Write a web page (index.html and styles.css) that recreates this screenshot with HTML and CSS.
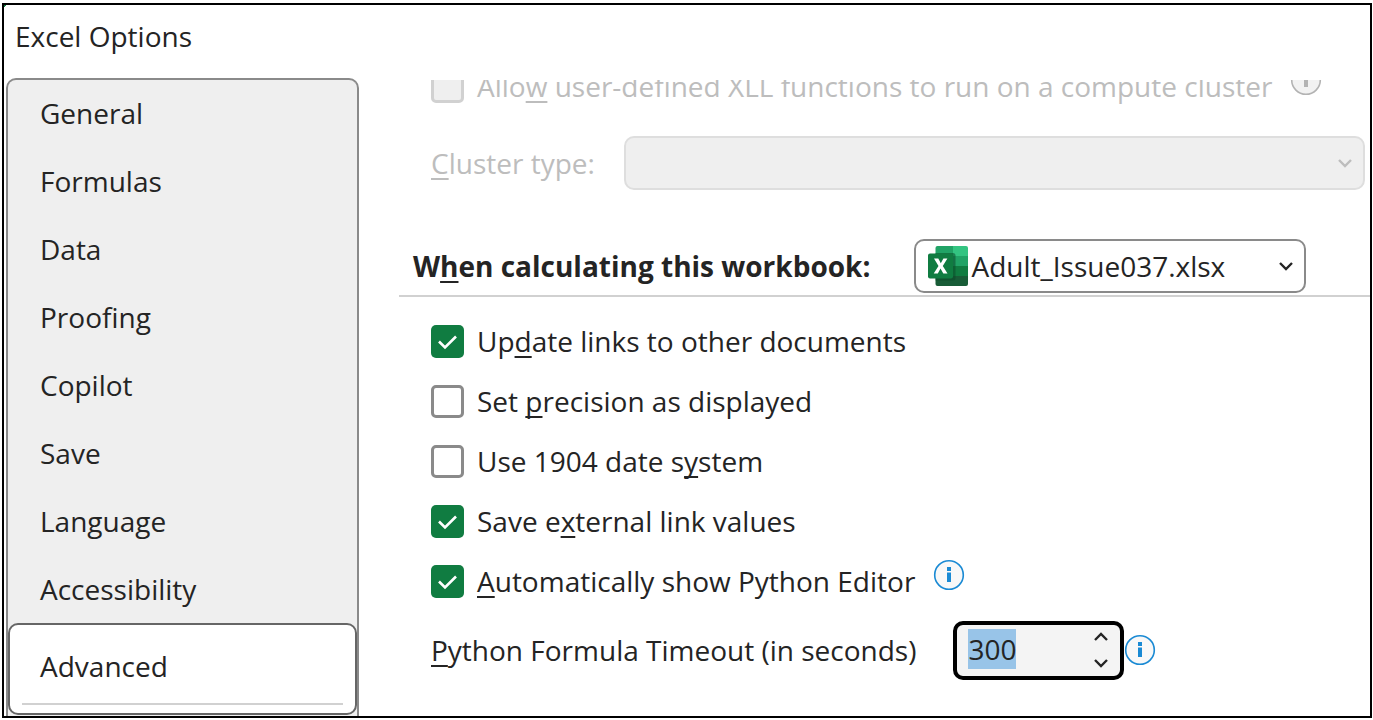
FILE: index.html
```html
<!DOCTYPE html>
<html lang="en">
<head>
<meta charset="utf-8">
<title>Excel Options</title>
<meta name="viewport" content="width=device-width, initial-scale=1">
<link rel="stylesheet" href="styles.css">
</head>
<body>
<div class="dialog">
  <h1 class="title">Excel Options</h1>
  <div class="body">
    <nav class="sidebar" aria-label="Option categories">
      <button class="tab" type="button">General</button>
      <button class="tab" type="button">Formulas</button>
      <button class="tab" type="button">Data</button>
      <button class="tab" type="button">Proofing</button>
      <button class="tab" type="button">Copilot</button>
      <button class="tab" type="button">Save</button>
      <button class="tab" type="button">Language</button>
      <button class="tab" type="button">Accessibility</button>
      <div class="tab-current">
        <button class="tab" type="button" aria-current="page">Advanced</button>
        <hr class="tab-rule">
      </div>
    </nav>
    <main class="panel">
      <div class="row row-scrolled disabled">
        <input class="check" type="checkbox" id="xll" disabled>
        <label for="xll">Allo<u>w</u> user-defined XLL functions to run on a compute cluster</label>
        <svg class="info info-raised" viewBox="0 0 32 32" aria-hidden="true"><circle cx="16" cy="16" r="14.3"/><path d="M14 8h4v4h-4zM14 13.500h4V23h-4z"/></svg>
      </div>
      <div class="row row-cluster disabled">
        <label for="cluster"><u>C</u>luster type:</label>
        <div class="combo combo-wide">
          <select id="cluster" disabled><option></option></select>
          <svg class="chevron" viewBox="0 0 16 10" aria-hidden="true"><path d="M2 2l6 6 6-6"/></svg>
        </div>
      </div>
      <div class="section">
        <label class="section-title" for="workbook">W<u>h</u>en calculating this workbook:</label>
        <div class="combo combo-book">
          <svg class="book-icon" viewBox="0 0 40 40" aria-hidden="true">
            <path fill="#21a366" d="M9.500 0H25v10H7.500V2a2 2 0 0 1 2-2z"/>
            <path fill="#33c481" d="M25 0h13a2 2 0 0 1 2 2v8H25z"/>
            <path fill="#107c41" d="M7.500 10H25v10H7.500z"/>
            <path fill="#21a366" d="M25 10h15v10H25z"/>
            <path fill="#185c37" d="M7.500 20H25v20H9.500a2 2 0 0 1-2-2z"/>
            <path fill="#107c41" d="M25 20h15v10H25z"/>
            <path fill="#185c37" d="M25 30h15v8a2 2 0 0 1-2 2H25z"/>
            <path fill="#0b4a29" opacity=".55" d="M7.500 7H25a2.500 2.500 0 0 1 2.500 2.500V32a2.500 2.500 0 0 1-2.500 2.500H7.500z"/>
            <rect fill="#107c41" y="7.500" width="25" height="25" rx="2"/>
            <path fill="#fff" d="M6 12.500h4.300l2.500 4.800 2.600-4.800h4l-4.600 7.500 4.700 7.500h-4.200l-2.800-5-2.700 5H5.700l4.800-7.500z"/>
          </svg>
          <select id="workbook"><option>Adult_Issue037.xlsx</option></select>
          <svg class="chevron" viewBox="0 0 16 10" aria-hidden="true"><path d="M2 2l6 6 6-6"/></svg>
        </div>
      </div>
      <div class="row">
        <input class="check" type="checkbox" id="links" checked>
        <label for="links">Up<u>d</u>ate links to other documents</label>
      </div>
      <div class="row">
        <input class="check" type="checkbox" id="precision">
        <label for="precision">Set <u>p</u>recision as displayed</label>
      </div>
      <div class="row">
        <input class="check" type="checkbox" id="date1904">
        <label for="date1904">Use 1904 date s<u>y</u>stem</label>
      </div>
      <div class="row">
        <input class="check" type="checkbox" id="external" checked>
        <label for="external">Save e<u>x</u>ternal link values</label>
      </div>
      <div class="row">
        <input class="check" type="checkbox" id="python" checked>
        <label for="python"><u>A</u>utomatically show Python Editor</label>
        <svg class="info info-raised" viewBox="0 0 32 32" aria-hidden="true"><circle cx="16" cy="16" r="14.300"/><path d="M14 8h4v4h-4zM14 13.500h4V23h-4z"/></svg>
      </div>
      <div class="row row-timeout">
        <label for="timeout"><u>P</u>ython Formula Timeout (in seconds)</label>
        <div class="spin">
          <input class="spin-value" type="text" inputmode="numeric" id="timeout" value="300">
          <div class="spin-buttons">
            <button type="button" aria-label="Increase"><svg class="chevron" viewBox="0 0 16 10" aria-hidden="true"><path d="M2 8l6-6 6 6"/></svg></button>
            <button type="button" aria-label="Decrease"><svg class="chevron" viewBox="0 0 16 10" aria-hidden="true"><path d="M2 2l6 6 6-6"/></svg></button>
          </div>
        </div>
        <svg class="info" viewBox="0 0 32 32" aria-hidden="true"><circle cx="16" cy="16" r="14.300"/><path d="M14 8h4v4h-4zM14 13.500h4V23h-4z"/></svg>
      </div>
    </main>
  </div>
</div>
<script src="script.js"></script>
</body>
</html>
```
FILE: styles.css
```css
* {
  box-sizing: border-box;
}

body {
  margin: 0;
  height: 100vh;
  padding: 3px 1px 2px 2px;
  background: #fff;
  color: #242424;
  font: 28px/40px "Open Sans", "Noto Sans", sans-serif;
}

button,
input,
select {
  margin: 0;
  font: inherit;
  color: inherit;
}

u {
  text-decoration: underline;
  text-decoration-thickness: 2px;
  text-decoration-skip-ink: none;
  text-underline-offset: 4px;
}

.dialog {
  display: flex;
  flex-direction: column;
  height: 100%;
  overflow: hidden;
  border: 2px solid #000;
  background: linear-gradient(135deg, #107c41 2px, #fff 2px);
}

.title {
  margin: 0;
  padding: 11px 11px 22px;
  font-size: 28px;
  font-weight: 400;
}

.body {
  display: flex;
  flex: 1;
  min-height: 0;
}

/* Category list */
.sidebar {
  flex: none;
  width: 353px;
  margin-left: 2px;
  overflow: hidden;
  border: 2px solid #8a8a8a;
  border-bottom: 0;
  border-radius: 10px 10px 0 0;
  background: #efefef;
}

.tab {
  display: block;
  width: 100%;
  height: 68px;
  padding: 0 32px 2px;
  border: 0;
  background: none;
  text-align: left;
}

.tab-current {
  height: 92px;
  margin-top: -1px;
  padding-top: 8px;
  border: 2px solid #666;
  border-radius: 10px;
  background: #fff;
}

.tab-current .tab {
  padding: 0 30px 2px;
}

.tab-rule {
  height: 2px;
  margin: 2px 12px 0;
  border: 0;
  background: #d1d1d1;
}

/* Settings */
.panel {
  flex: 1;
  min-width: 0;
  margin: 2px 0 0 40px;
  overflow: hidden;
  white-space: nowrap;
}

.row {
  display: flex;
  align-items: center;
  height: 60px;
  padding-left: 32px;
}

.row-scrolled {
  margin-top: -24px;
}

.row-cluster {
  gap: 29px;
  height: 94px;
  padding-right: 5px;
}

.disabled {
  color: #bdbdbd;
}

.check {
  appearance: none;
  flex: none;
  width: 33px;
  height: 33px;
  margin-right: 13px;
  border: 3px solid #8a8a8a;
  border-radius: 5px;
  background: #fff;
}

.check:checked {
  border: 0;
  background: #107c41 url("data:image/svg+xml,%3Csvg xmlns='http://www.w3.org/2000/svg' viewBox='0 0 33 33'%3E%3Cpath d='M8 16.500l6 6L25 11.500' fill='none' stroke='%23fff' stroke-width='2.600'/%3E%3C/svg%3E");
}

.check:disabled {
  border-color: #d1d1d1;
  background: #efefef;
}

.info {
  flex: none;
  width: 32px;
  height: 32px;
  fill: #1a8ad4;
}

.info circle {
  fill: #f8f8f8;
  stroke: #1a8ad4;
  stroke-width: 1.6;
}

.info-raised {
  margin: 0 0 12px 18px;
}

.disabled .info {
  fill: #b3b3b3;
}

.disabled .info circle {
  fill: #f2f2f2;
  stroke: #b3b3b3;
}

.combo {
  display: flex;
  align-items: center;
  height: 54px;
  padding: 0 10px 0 12px;
  border: 2px solid #8a8a8a;
  border-radius: 10px;
  background: #fff;
}

.combo select {
  appearance: none;
  flex: 1;
  min-width: 0;
  height: 40px;
  padding: 0;
  border: 0;
  outline: 0;
  background: none;
}

.combo-wide {
  flex: 1;
  border-color: #dedede;
  background: #efefef;
}

.combo-book {
  flex: none;
  width: 392px;
}

.book-icon {
  flex: none;
  width: 40px;
  height: 40px;
  margin-right: 3px;
}

.chevron {
  flex: none;
  width: 16px;
  height: 10px;
  fill: none;
  stroke: currentColor;
  stroke-width: 2.4;
}

.section {
  display: flex;
  align-items: center;
  gap: 44px;
  height: 87px;
  margin-bottom: 14px;
  padding: 26px 0 0 14px;
  border-bottom: 2px solid #d1d1d1;
}

.section-title {
  font-weight: 700;
}

.row-timeout {
  height: 78px;
}

.spin {
  display: flex;
  width: 171px;
  height: 59px;
  margin-left: 37px;
  border: 4px solid #000;
  border-radius: 10px;
  background: #f4f4f4;
}

.spin-value {
  flex: 1;
  min-width: 0;
  padding: 0 0 2px 11px;
  border: 0;
  outline: 0;
  background: none;
}

.spin-value::selection {
  background: #98c4e8;
  color: #242424;
}

.spin-buttons {
  display: flex;
  flex-direction: column;
  width: 38px;
}

.spin-buttons button {
  display: flex;
  flex: 1;
  align-items: center;
  justify-content: center;
  padding: 0;
  border: 0;
  background: none;
}
```
FILE: script.js
```js
const timeout = document.getElementById("timeout");
timeout.focus();
timeout.select();
```
